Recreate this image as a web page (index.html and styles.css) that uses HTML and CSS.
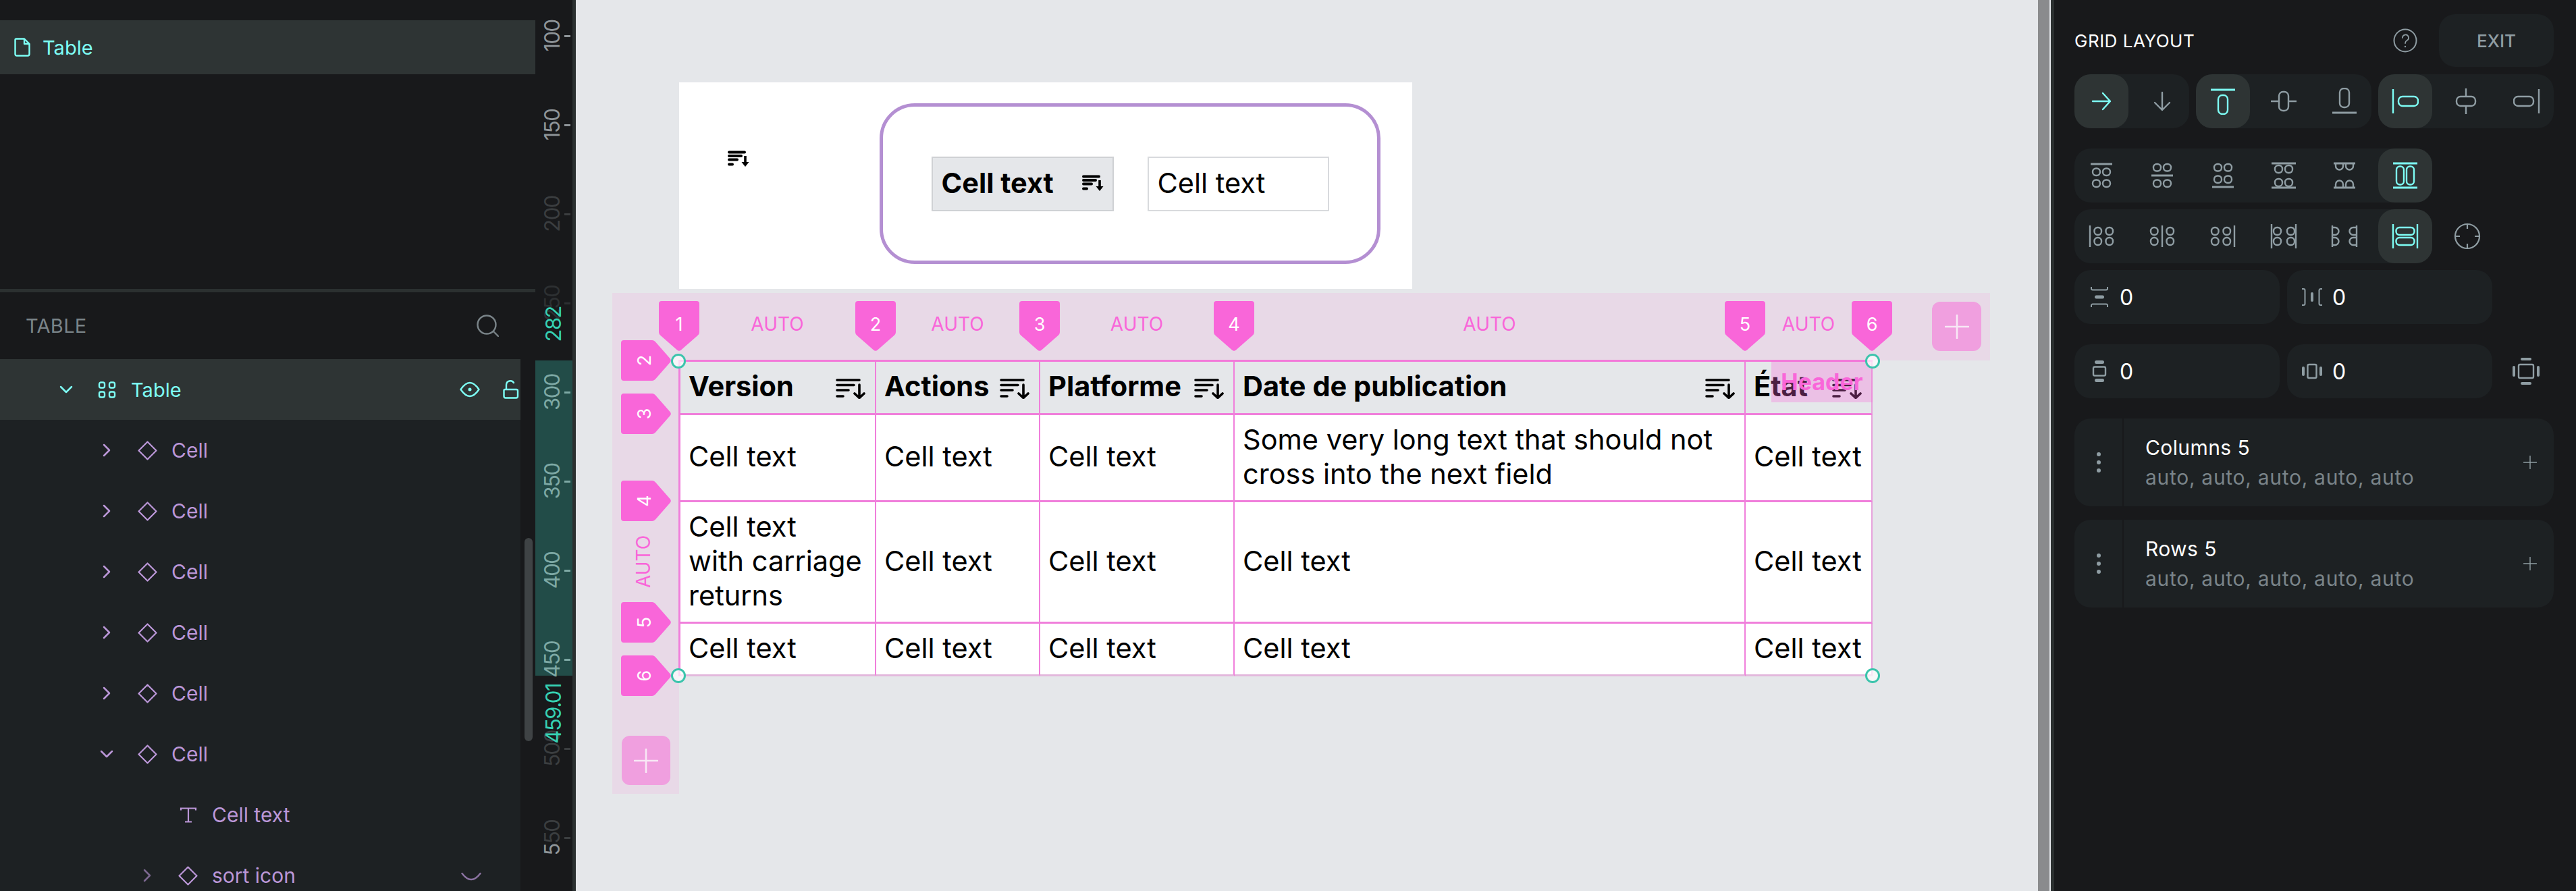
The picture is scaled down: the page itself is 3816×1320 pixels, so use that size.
FILE: index.html
```html
<!DOCTYPE html>
<html lang="en">
<head>
    <meta charset="UTF-8">
    <title>Table - Grid layout</title>
    <link rel="stylesheet" href="styles.css">
</head>
<body>
    <!-- icon sprite -->
    <svg class="sprite" xmlns="http://www.w3.org/2000/svg">
        <symbol id="i-sort" viewBox="0 0 44 31"><path d="M2 3H35M2 10.500H27M2 18H19M2 27H11M35 10V29M28 23l7 6.500 7-6.500" fill="none" stroke="currentColor" stroke-width="3.600" stroke-linecap="round" stroke-linejoin="round"/></symbol>
        <symbol id="i-sort-bold" viewBox="0 0 32 24"><path d="M2 2.500H25M2 8H20M2 13.500H14M2 20.500H7" fill="none" stroke="currentColor" stroke-width="4" stroke-linecap="round"/><path d="M26 8V20" stroke="currentColor" stroke-width="3.600"/><path d="M20.500 17H31.500L26 24Z" fill="currentColor"/></symbol>
        <symbol id="i-mark" viewBox="0 0 60 74"><path d="M4 0H56a4 4 0 0 1 4 4V46a6 6 0 0 1-2.500 5L33 72.500a4.500 4.500 0 0 1-6 0L2.500 51A6 6 0 0 1 0 46V4a4 4 0 0 1 4-4Z" fill="currentColor"/></symbol>
        <symbol id="i-plus" viewBox="0 0 36 36"><path d="M18 1V35M1 18H35" stroke="currentColor" stroke-width="2.600" stroke-linecap="round"/></symbol>
        <symbol id="i-chev-r" viewBox="0 0 20 20"><path d="M6 2l8 8-8 8" fill="none" stroke="currentColor" stroke-width="2.500" stroke-linecap="round" stroke-linejoin="round"/></symbol>
        <symbol id="i-chev-d" viewBox="0 0 20 20"><path d="M2 6l8 8 8-8" fill="none" stroke="currentColor" stroke-width="2.500" stroke-linecap="round" stroke-linejoin="round"/></symbol>
        <symbol id="i-diamond" viewBox="0 0 29 29"><path d="M14.500 1.500L27.500 14.500 14.500 27.500 1.500 14.500Z" fill="none" stroke="currentColor" stroke-width="2.200" stroke-linejoin="round"/></symbol>
        <symbol id="i-text" viewBox="0 0 29 24"><path d="M4 5V2H26V5M15 2V22M10 22H20" fill="none" stroke="currentColor" stroke-width="2.200"/></symbol>
        <symbol id="i-grid" viewBox="0 0 29 26"><g fill="none" stroke="currentColor" stroke-width="2.400"><rect x="3" y="2" width="8" height="8" rx="2.500"/><rect x="18" y="2" width="8" height="8" rx="2.500"/><rect x="3" y="16" width="8" height="8" rx="2.500"/><rect x="18" y="16" width="8" height="8" rx="2.500"/></g></symbol>
        <symbol id="i-page" viewBox="0 0 24 28"><path d="M3 1.500H15L22.500 9V24a2.500 2.500 0 0 1-2.500 2.500H4A2.500 2.500 0 0 1 1.500 24V3A1.500 1.500 0 0 1 3 1.500ZM15 1.500V9H22.500" fill="none" stroke="currentColor" stroke-width="2.400" stroke-linejoin="round"/></symbol>
        <symbol id="i-search" viewBox="0 0 33 33"><ellipse cx="15" cy="15" rx="13.500" ry="13.500" fill="none" stroke="currentColor" stroke-width="2.400"/><path d="M25 25L32 32" stroke="currentColor" stroke-width="2.400" stroke-linecap="round"/></symbol>
        <symbol id="i-eye" viewBox="0 0 30 24"><path d="M1.500 12Q15-8 28.500 12 15 32 1.500 12Z" fill="none" stroke="currentColor" stroke-width="2.400" stroke-linejoin="round"/><circle cx="15" cy="12" r="2.500" fill="currentColor"/></symbol>
        <symbol id="i-eye-off" viewBox="0 0 30 14"><path d="M1.500 2Q15 20 28.500 2" fill="none" stroke="currentColor" stroke-width="2.400" stroke-linecap="round"/></symbol>
        <symbol id="i-lock" viewBox="0 0 24 28"><path d="M3 14H20a2 2 0 0 1 2 2V24a2.500 2.500 0 0 1-2.500 2.500H4A2.500 2.500 0 0 1 1.500 24V15.500A1.500 1.500 0 0 1 3 14ZM5 14V7a6 6 0 0 1 11-3" fill="none" stroke="currentColor" stroke-width="2.400" stroke-linecap="round"/></symbol>
        <symbol id="i-help" viewBox="0 0 36 36"><circle cx="18" cy="18" r="16.500" fill="none" stroke="currentColor" stroke-width="2"/><path d="M14 14a4.500 4.500 0 1 1 6.500 4c-1.800 1-2.500 2-2.500 4" fill="none" stroke="currentColor" stroke-width="1.800" stroke-linecap="round"/><circle cx="18" cy="27" r="1.200" fill="currentColor"/></symbol>
        <symbol id="i-right" viewBox="0 0 40 40"><path d="M7 20H33M22 8L33 20 22 32" fill="none" stroke="currentColor" stroke-width="2.400" stroke-linecap="round" stroke-linejoin="round"/></symbol>
        <symbol id="i-down" viewBox="0 0 40 40"><path d="M20 7V33M9 22L20 33 31 22" fill="none" stroke="currentColor" stroke-width="2.400" stroke-linecap="round" stroke-linejoin="round"/></symbol>
        <symbol id="i-al-top" viewBox="0 0 40 40"><path d="M2 3H38" stroke="currentColor" stroke-width="3"/><rect x="13" y="11" width="14" height="28" rx="6" fill="none" stroke="currentColor" stroke-width="2.400"/></symbol>
        <symbol id="i-al-mid" viewBox="0 0 40 40"><path d="M1 20H13M27 20H39" stroke="currentColor" stroke-width="2.400"/><rect x="13" y="6" width="14" height="28" rx="6" fill="none" stroke="currentColor" stroke-width="2.400"/></symbol>
        <symbol id="i-al-bot" viewBox="0 0 40 40"><path d="M2 37H38" stroke="currentColor" stroke-width="3"/><rect x="13" y="1" width="14" height="28" rx="6" fill="none" stroke="currentColor" stroke-width="2.400"/></symbol>
        <symbol id="i-al-left" viewBox="0 0 40 40"><path d="M2 2V38" stroke="currentColor" stroke-width="2.400"/><rect x="10" y="13" width="29" height="14" rx="6" fill="none" stroke="currentColor" stroke-width="2.400"/></symbol>
        <symbol id="i-al-center" viewBox="0 0 40 40"><path d="M20 1V13M20 27V39" stroke="currentColor" stroke-width="2.400"/><rect x="6" y="13" width="28" height="14" rx="6" fill="none" stroke="currentColor" stroke-width="2.400"/></symbol>
        <symbol id="i-al-right" viewBox="0 0 40 40"><path d="M38 2V38" stroke="currentColor" stroke-width="2.400"/><rect x="1" y="13" width="29" height="14" rx="6" fill="none" stroke="currentColor" stroke-width="2.400"/></symbol>
        <g id="ovals-a" fill="none" stroke="currentColor" stroke-width="2.400"><rect x="7" y="9.500" width="11" height="10.500" rx="5"/><rect x="22" y="9.500" width="11" height="10.500" rx="5"/><rect x="7" y="26.500" width="11" height="10.500" rx="5"/><rect x="22" y="26.500" width="11" height="10.500" rx="5"/></g>
        <g id="ovals-b" fill="none" stroke="currentColor" stroke-width="2.400"><rect x="7" y="3" width="11" height="10.500" rx="5"/><rect x="22" y="3" width="11" height="10.500" rx="5"/><rect x="7" y="26.500" width="11" height="10.500" rx="5"/><rect x="22" y="26.500" width="11" height="10.500" rx="5"/></g>
        <g id="ovals-c" fill="none" stroke="currentColor" stroke-width="2.400"><rect x="7" y="3" width="11" height="10.500" rx="5"/><rect x="22" y="3" width="11" height="10.500" rx="5"/><rect x="7" y="20.500" width="11" height="10.500" rx="5"/><rect x="22" y="20.500" width="11" height="10.500" rx="5"/></g>
        <g id="ovals-d" fill="none" stroke="currentColor" stroke-width="2.400"><rect x="7" y="5" width="11" height="11" rx="5"/><rect x="22" y="5" width="11" height="11" rx="5"/><rect x="7" y="25" width="11" height="11" rx="5"/><rect x="22" y="25" width="11" height="11" rx="5"/></g>
        <path id="ovals-e" d="M7 2V6a5.500 5.500 0 0 0 11 0V2M22 2V6a5.500 5.500 0 0 0 11 0V2M7 38V33a5.500 5.500 0 0 1 11 0V38M22 38V33a5.500 5.500 0 0 1 11 0V38" fill="none" stroke="currentColor" stroke-width="2.400"/>
        <g id="tall" fill="none" stroke="currentColor" stroke-width="2.400"><rect x="7" y="6.500" width="11" height="27" rx="5"/><rect x="22" y="6.500" width="11" height="27" rx="5"/></g>
        <symbol id="i-a1" viewBox="0 0 40 40"><path d="M4 3H36" stroke="currentColor" stroke-width="3"/><use href="#ovals-a"/></symbol>
        <symbol id="i-a2" viewBox="0 0 40 40"><path d="M4 20H36" stroke="currentColor" stroke-width="3"/><use href="#ovals-b"/></symbol>
        <symbol id="i-a3" viewBox="0 0 40 40"><path d="M4 37H36" stroke="currentColor" stroke-width="3"/><use href="#ovals-c"/></symbol>
        <symbol id="i-a4" viewBox="0 0 40 40"><path d="M2 2H38M2 38H38" stroke="currentColor" stroke-width="3"/><use href="#ovals-d"/></symbol>
        <symbol id="i-a5" viewBox="0 0 40 40"><path d="M4 2H36M4 38H36" stroke="currentColor" stroke-width="3"/><use href="#ovals-e"/></symbol>
        <symbol id="i-a6" viewBox="0 0 40 40"><path d="M2 2H38M2 38H38" stroke="currentColor" stroke-width="3"/><use href="#tall"/></symbol>
        <symbol id="i-b1" viewBox="0 0 40 40"><g transform="matrix(0 1 1 0 0 0)"><path d="M4 3H36" stroke="currentColor" stroke-width="2.400"/><use href="#ovals-a"/></g></symbol>
        <symbol id="i-b2" viewBox="0 0 40 40"><g transform="matrix(0 1 1 0 0 0)"><path d="M4 20H36" stroke="currentColor" stroke-width="2.400"/><use href="#ovals-b"/></g></symbol>
        <symbol id="i-b3" viewBox="0 0 40 40"><g transform="matrix(0 1 1 0 0 0)"><path d="M4 37H36" stroke="currentColor" stroke-width="2.400"/><use href="#ovals-c"/></g></symbol>
        <symbol id="i-b4" viewBox="0 0 40 40"><g transform="matrix(0 1 1 0 0 0)"><path d="M2 2H38M2 38H38" stroke="currentColor" stroke-width="2.400"/><use href="#ovals-d"/></g></symbol>
        <symbol id="i-b5" viewBox="0 0 40 40"><g transform="matrix(0 1 1 0 0 0)"><path d="M4 2H36M4 38H36" stroke="currentColor" stroke-width="2.400"/><use href="#ovals-e"/></g></symbol>
        <symbol id="i-b6" viewBox="0 0 40 40"><g transform="matrix(0 1 1 0 0 0)"><path d="M2 2H38M2 38H38" stroke="currentColor" stroke-width="2.400"/><use href="#tall"/></g></symbol>
        <symbol id="i-target" viewBox="0 0 40 40"><circle cx="20" cy="20" r="18" fill="none" stroke="currentColor" stroke-width="2.200"/><path d="M20 2V9M20 31V38M2 20H9M31 20H38" stroke="currentColor" stroke-width="2.200"/></symbol>
        <symbol id="i-rowgap" viewBox="0 0 32 32"><path d="M4 1V3.500A2 2 0 0 0 6 5.500H26A2 2 0 0 0 28 3.500V1M4 31V28.500A2 2 0 0 1 6 26.500H26A2 2 0 0 1 28 28.500V31" fill="none" stroke="currentColor" stroke-width="2"/><rect x="9" y="13.500" width="14" height="5" rx="2.500" fill="currentColor"/></symbol>
        <symbol id="i-colgap" viewBox="0 0 32 32"><g transform="matrix(0 1 1 0 0 0)"><path d="M4 1V3.500A2 2 0 0 0 6 5.500H26A2 2 0 0 0 28 3.500V1M4 31V28.500A2 2 0 0 1 6 26.500H26A2 2 0 0 1 28 28.500V31" fill="none" stroke="currentColor" stroke-width="2"/><rect x="9" y="14" width="14" height="4" rx="2" fill="currentColor"/></g></symbol>
        <symbol id="i-padv" viewBox="0 0 32 32"><rect x="9" y="0" width="14" height="5" rx="2.500" fill="currentColor"/><rect x="7" y="9.500" width="18" height="13" rx="2" fill="none" stroke="currentColor" stroke-width="2.400"/><rect x="9" y="27" width="14" height="5" rx="2.500" fill="currentColor"/></symbol>
        <symbol id="i-padh" viewBox="0 0 32 32"><rect x="1" y="9" width="4" height="14" rx="2" fill="currentColor"/><rect x="9.500" y="6" width="13" height="20" rx="2" fill="none" stroke="currentColor" stroke-width="2.400"/><rect x="27" y="9" width="4" height="14" rx="2" fill="currentColor"/></symbol>
        <symbol id="i-padall" viewBox="0 0 40 40"><rect x="12" y="0" width="16" height="4" rx="2" fill="currentColor"/><rect x="12" y="36" width="16" height="4" rx="2" fill="currentColor"/><rect x="0" y="12" width="4" height="16" rx="2" fill="currentColor"/><rect x="36" y="12" width="4" height="16" rx="2" fill="currentColor"/><rect x="9" y="10" width="22" height="20" rx="2" fill="none" stroke="currentColor" stroke-width="2.400"/></symbol>
        <symbol id="i-dots" viewBox="0 0 8 32"><circle cx="4" cy="4" r="3"/><circle cx="4" cy="16" r="3"/><circle cx="4" cy="28" r="3"/></symbol>
    </svg>

    <div class="app">
        <aside class="sidebar">
            <div class="pages">
                <div class="page-row">
                    <svg class="ico-page"><use href="#i-page"/></svg>
                    <span>Table</span>
                </div>
            </div>
            <div class="sidebar-divider"></div>
            <div class="layers-head">
                <span>TABLE</span>
                <svg class="ico-search"><use href="#i-search"/></svg>
            </div>
            <div class="layers-body">
                <div class="layers">
                    <div class="layer layer-root">
                        <svg class="chev"><use href="#i-chev-d"/></svg>
                        <svg class="layer-ico"><use href="#i-grid"/></svg>
                        <span>Table</span>
                        <span class="layer-actions">
                            <svg class="ico-eye"><use href="#i-eye"/></svg>
                            <svg class="ico-lock"><use href="#i-lock"/></svg>
                        </span>
                    </div>
                    <div class="layer depth-1"><svg class="chev"><use href="#i-chev-r"/></svg><svg class="layer-ico"><use href="#i-diamond"/></svg><span>Cell</span></div>
                    <div class="layer depth-1"><svg class="chev"><use href="#i-chev-r"/></svg><svg class="layer-ico"><use href="#i-diamond"/></svg><span>Cell</span></div>
                    <div class="layer depth-1"><svg class="chev"><use href="#i-chev-r"/></svg><svg class="layer-ico"><use href="#i-diamond"/></svg><span>Cell</span></div>
                    <div class="layer depth-1"><svg class="chev"><use href="#i-chev-r"/></svg><svg class="layer-ico"><use href="#i-diamond"/></svg><span>Cell</span></div>
                    <div class="layer depth-1"><svg class="chev"><use href="#i-chev-r"/></svg><svg class="layer-ico"><use href="#i-diamond"/></svg><span>Cell</span></div>
                    <div class="layer depth-1"><svg class="chev"><use href="#i-chev-d"/></svg><svg class="layer-ico"><use href="#i-diamond"/></svg><span>Cell</span></div>
                    <div class="layer depth-2"><span class="chev"></span><svg class="layer-ico"><use href="#i-text"/></svg><span>Cell text</span></div>
                    <div class="layer depth-2">
                        <svg class="chev dim"><use href="#i-chev-r"/></svg>
                        <svg class="layer-ico"><use href="#i-diamond"/></svg>
                        <span>sort icon</span>
                        <svg class="ico-eye-off"><use href="#i-eye-off"/></svg>
                    </div>
                </div>
                <div class="scroll-gutter"><div class="scroll-thumb"></div></div>
            </div>
        </aside>

        <div class="ruler">
            <div class="ruler-band"></div>
            <div class="tick t100"><span>100</span></div>
            <div class="tick t150"><span>150</span></div>
            <div class="tick t200 faint"><span>200</span></div>
            <div class="tick t250 fainter"><span>250</span></div>
            <div class="tick t300 on-band"><span>300</span></div>
            <div class="tick t350 on-band"><span>350</span></div>
            <div class="tick t400 on-band"><span>400</span></div>
            <div class="tick t450 on-band"><span>450</span></div>
            <div class="tick t500 faint"><span>500</span></div>
            <div class="tick t550 faint"><span><b>5</b>50</span></div>
            <div class="ruler-value v-start">282</div>
            <div class="ruler-value v-end">459.01</div>
        </div>
        <div class="edge"></div>

        <main class="canvas">
            <div class="artboard">
                <svg class="ico-sort-small loose"><use href="#i-sort-bold"/></svg>
                <div class="frame">
                    <div class="demo-cell demo-head">
                        <span>Cell text</span>
                        <svg class="ico-sort-small"><use href="#i-sort-bold"/></svg>
                    </div>
                    <div class="demo-cell">Cell text</div>
                </div>
            </div>

            <div class="col-rail">
                <div class="track"><span class="auto">AUTO</span><div class="mark"><svg><use href="#i-mark"/></svg><span>1</span></div></div>
                <div class="track"><span class="auto">AUTO</span><div class="mark"><svg><use href="#i-mark"/></svg><span>2</span></div></div>
                <div class="track"><span class="auto">AUTO</span><div class="mark"><svg><use href="#i-mark"/></svg><span>3</span></div></div>
                <div class="track"><span class="auto">AUTO</span><div class="mark"><svg><use href="#i-mark"/></svg><span>4</span></div></div>
                <div class="track"><span class="auto">AUTO</span><div class="mark"><svg><use href="#i-mark"/></svg><span>5</span></div><div class="mark mark-end"><svg><use href="#i-mark"/></svg><span>6</span></div></div>
                <div class="add-btn add-col"><svg><use href="#i-plus"/></svg></div>
            </div>
            <div class="row-rail">
                <div class="row-track r1"><div class="mark"><svg><use href="#i-mark"/></svg><span>2</span></div></div>
                <div class="row-track r2"><div class="mark"><svg><use href="#i-mark"/></svg><span>3</span></div></div>
                <div class="row-track r3"><div class="mark"><svg><use href="#i-mark"/></svg><span>4</span></div><span class="auto">AUTO</span></div>
                <div class="row-track r4"><div class="mark"><svg><use href="#i-mark"/></svg><span>5</span></div><div class="mark mark-end"><svg><use href="#i-mark"/></svg><span>6</span></div></div>
                <div class="add-btn add-row"><svg><use href="#i-plus"/></svg></div>
            </div>

            <div class="table">
                <div class="cell head"><span>Version</span><svg class="ico-sort"><use href="#i-sort"/></svg></div>
                <div class="cell head"><span>Actions</span><svg class="ico-sort"><use href="#i-sort"/></svg></div>
                <div class="cell head"><span>Platforme</span><svg class="ico-sort"><use href="#i-sort"/></svg></div>
                <div class="cell head"><span>Date de publication</span><svg class="ico-sort"><use href="#i-sort"/></svg></div>
                <div class="cell head"><span>État</span><svg class="ico-sort"><use href="#i-sort"/></svg></div>

                <div class="cell">Cell text</div>
                <div class="cell">Cell text</div>
                <div class="cell">Cell text</div>
                <div class="cell">Some very long text that should not<br>cross into the next field</div>
                <div class="cell">Cell text</div>

                <div class="cell">Cell text<br>with carriage<br>returns</div>
                <div class="cell">Cell text</div>
                <div class="cell">Cell text</div>
                <div class="cell">Cell text</div>
                <div class="cell">Cell text</div>

                <div class="cell">Cell text</div>
                <div class="cell">Cell text</div>
                <div class="cell">Cell text</div>
                <div class="cell">Cell text</div>
                <div class="cell">Cell text</div>

                <div class="area-label">Header</div>
                <i class="handle tl"></i><i class="handle tr"></i><i class="handle bl"></i><i class="handle br"></i>
            </div>
        </main>

        <div class="split-handle"></div>
        <div class="split-gap"></div>
        <div class="edge"></div>

        <aside class="panel">
            <div class="panel-head">
                <span class="panel-title">GRID LAYOUT</span>
                <svg class="ico-help"><use href="#i-help"/></svg>
                <div class="exit-btn">EXIT</div>
            </div>

            <div class="tool-row row-first">
                <div class="tool-group">
                    <div class="tool active"><svg><use href="#i-right"/></svg></div>
                    <div class="tool"><svg><use href="#i-down"/></svg></div>
                </div>
                <div class="tool-group">
                    <div class="tool active"><svg><use href="#i-al-top"/></svg></div>
                    <div class="tool"><svg><use href="#i-al-mid"/></svg></div>
                    <div class="tool"><svg><use href="#i-al-bot"/></svg></div>
                </div>
                <div class="tool-group">
                    <div class="tool active"><svg><use href="#i-al-left"/></svg></div>
                    <div class="tool"><svg><use href="#i-al-center"/></svg></div>
                    <div class="tool"><svg><use href="#i-al-right"/></svg></div>
                </div>
            </div>

            <div class="tool-row row-second">
                <div class="tool-group">
                    <div class="tool"><svg><use href="#i-a1"/></svg></div>
                    <div class="tool"><svg><use href="#i-a2"/></svg></div>
                    <div class="tool"><svg><use href="#i-a3"/></svg></div>
                    <div class="tool"><svg><use href="#i-a4"/></svg></div>
                    <div class="tool"><svg><use href="#i-a5"/></svg></div>
                    <div class="tool active"><svg><use href="#i-a6"/></svg></div>
                </div>
            </div>

            <div class="tool-row row-third">
                <div class="tool-group">
                    <div class="tool"><svg><use href="#i-b1"/></svg></div>
                    <div class="tool"><svg><use href="#i-b2"/></svg></div>
                    <div class="tool"><svg><use href="#i-b3"/></svg></div>
                    <div class="tool"><svg><use href="#i-b4"/></svg></div>
                    <div class="tool"><svg><use href="#i-b5"/></svg></div>
                    <div class="tool active"><svg><use href="#i-b6"/></svg></div>
                </div>
                <svg class="side-ico target"><use href="#i-target"/></svg>
            </div>

            <div class="input-row row-third">
                <div class="num-input"><svg><use href="#i-rowgap"/></svg><span>0</span></div>
                <div class="num-input"><svg><use href="#i-colgap"/></svg><span>0</span></div>
            </div>
            <div class="input-row row-second">
                <div class="num-input"><svg><use href="#i-padv"/></svg><span>0</span></div>
                <div class="num-input"><svg><use href="#i-padh"/></svg><span>0</span></div>
                <svg class="side-ico"><use href="#i-padall"/></svg>
            </div>

            <div class="track-card first-card">
                <div class="card-grip"><svg><use href="#i-dots"/></svg></div>
                <div class="card-body">
                    <div class="card-title">Columns 5</div>
                    <div class="card-sub">auto, auto, auto, auto, auto</div>
                </div>
                <svg class="card-plus"><use href="#i-plus"/></svg>
            </div>
            <div class="track-card">
                <div class="card-grip"><svg><use href="#i-dots"/></svg></div>
                <div class="card-body">
                    <div class="card-title">Rows 5</div>
                    <div class="card-sub">auto, auto, auto, auto, auto</div>
                </div>
                <svg class="card-plus"><use href="#i-plus"/></svg>
            </div>
        </aside>
    </div>
</body>
</html>
```

FILE: styles.css
```css
* {
    box-sizing: border-box;
}
body {
    margin: 0;
    overflow: hidden;
    background: #18191b;
    font-family: Inter, "Liberation Sans", sans-serif;
}
svg {
    display: block;
}
.sprite {
    position: absolute;
    width: 0;
    height: 0;
}
.app {
    display: flex;
    height: 1320px;
}

/* left sidebar */
.sidebar {
    width: 793px;
    height: 1320px;
    display: flex;
    flex-direction: column;
    background: #18191b;
    overflow: hidden;
}
.pages {
    height: 428px;
    flex-shrink: 0;
    padding-top: 30px;
}
.page-row {
    height: 80px;
    background: #2e3434;
    color: #7efff5;
    display: flex;
    align-items: center;
    padding-left: 21px;
    font-size: 29px;
}
.ico-page {
    width: 24px;
    height: 28px;
    margin-right: 18px;
}
.sidebar-divider {
    height: 5px;
    flex-shrink: 0;
    background: #2b3030;
}
.layers-head {
    height: 99px;
    flex-shrink: 0;
    display: flex;
    align-items: center;
    justify-content: space-between;
    padding: 0 54px 0 38px;
    color: #7a8489;
    font-size: 29px;
    letter-spacing: 0.3px;
}
.ico-search {
    width: 33px;
    height: 33px;
}
.layers-body {
    flex: 1;
    min-height: 0;
    display: flex;
}
.layers {
    width: 771px;
    background: #1d2123;
}
.layer {
    height: 90px;
    display: flex;
    align-items: center;
    color: #bb97d8;
    font-size: 30px;
}
.layer-root {
    padding: 0 2px 0 88px;
    background: #2e3434;
    color: #7efff5;
    font-size: 29px;
}
.depth-1 {
    padding-left: 148px;
}
.depth-2 {
    padding-left: 208px;
}
.chev {
    width: 20px;
    height: 20px;
    margin-right: 36px;
    flex-shrink: 0;
}
.chev.dim {
    opacity: 0.6;
}
.layer-ico {
    width: 29px;
    height: 29px;
    margin-right: 21px;
    flex-shrink: 0;
}
.layer-actions {
    margin-left: auto;
    display: flex;
    align-items: center;
    gap: 34px;
}
.ico-eye {
    width: 30px;
    height: 24px;
}
.ico-lock {
    width: 24px;
    height: 28px;
}
.ico-eye-off {
    width: 30px;
    height: 14px;
    margin: 0 58px 0 auto;
    position: relative;
    top: 2px;
    opacity: 0.7;
}
.scroll-gutter {
    width: 22px;
    position: relative;
}
.scroll-thumb {
    position: absolute;
    left: 6px;
    top: 265px;
    width: 12px;
    height: 301px;
    border-radius: 6px;
    background: #3f4345;
}

/* vertical ruler */
.ruler {
    width: 55px;
    height: 1320px;
    position: relative;
    background: #18191b;
}
.ruler-band {
    position: absolute;
    left: 0;
    top: 534px;
    width: 55px;
    height: 467px;
    background: #224c48;
}
.tick {
    position: absolute;
    left: 43px;
    width: 9px;
    height: 3px;
    background: #8f9599;
    color: #8f9599;
}
.tick span {
    position: absolute;
    left: -34px;
    top: 1px;
    width: 32px;
    font-size: 31px;
    line-height: 32px;
    letter-spacing: -1.500px;
    white-space: nowrap;
    writing-mode: vertical-rl;
    transform: translateY(-50%) rotate(180deg);
}
.tick b {
    font-weight: 400;
    color: #8f9599;
}
.faint {
    background: #3b3e40;
    color: #3b3e40;
}
.fainter {
    background: #2d3032;
    color: #2d3032;
}
.on-band {
    background: #7ea9a5;
    color: #7ea9a5;
}
.t100 { top: 52px; }
.t150 { top: 184px; }
.t200 { top: 316px; }
.t250 { top: 448px; }
.t300 { top: 580px; }
.t350 { top: 712px; }
.t400 { top: 844px; }
.t450 { top: 976px; }
.t500 { top: 1108px; }
.t550 { top: 1240px; }
.ruler-value {
    position: absolute;
    left: 11px;
    width: 32px;
    text-align: center;
    writing-mode: vertical-rl;
    transform: rotate(180deg);
    font-size: 31px;
    line-height: 32px;
    letter-spacing: -1.500px;
    color: #36d1b3;
}
.v-start {
    top: 454px;
}
.v-end {
    top: 1013px;
}
.edge {
    width: 5px;
    background: #2b3030;
}

/* canvas */
.canvas {
    flex: 1;
    position: relative;
    background: #e5e7ea;
    overflow: hidden;
    color: #000;
}
.artboard {
    position: absolute;
    left: 153px;
    top: 122px;
    width: 1086px;
    height: 306px;
    background: #fff;
}
.ico-sort-small {
    width: 32px;
    height: 24px;
    flex-shrink: 0;
}
.ico-sort-small.loose {
    position: absolute;
    left: 72px;
    top: 101px;
}
.frame {
    position: absolute;
    left: 297px;
    top: 31px;
    width: 742px;
    height: 238px;
    border: 5px solid #b48fd2;
    border-radius: 52px;
    display: flex;
    align-items: center;
    justify-content: center;
    gap: 50px;
}
.demo-cell {
    width: 269px;
    height: 81px;
    border: 2px solid #d8dadd;
    padding: 0 13px 3px;
    display: flex;
    align-items: center;
    font-size: 41.500px;
}
.demo-head {
    width: 270px;
    background: #e5e7ea;
    border-color: #cfd1d4;
    font-weight: 700;
    justify-content: space-between;
}

/* grid editor rails */
.col-rail {
    position: absolute;
    left: 54px;
    top: 434px;
    width: 2041px;
    height: 100px;
    padding-left: 99px;
    background: #e8d9e7;
    display: grid;
    grid-template-columns: 291px 243px 288px 757px 188px;
}
.track {
    position: relative;
    text-align: center;
    padding-top: 26px;
}
.auto {
    color: #f966d9;
    font-size: 28px;
    line-height: 40px;
}
.mark {
    position: absolute;
    left: -30px;
    top: 12px;
    width: 60px;
    height: 74px;
    color: #f966d9;
}
.mark svg {
    width: 60px;
    height: 74px;
}
.mark span {
    position: absolute;
    left: 0;
    right: 0;
    top: 16px;
    text-align: center;
    color: #fff;
    font-size: 27px;
    line-height: 38px;
}
.mark-end {
    left: auto;
    right: -30px;
}
.add-btn {
    position: absolute;
    background: #f09fdf;
    color: #f8e8f5;
    border-radius: 12px;
    display: flex;
    align-items: center;
    justify-content: center;
}
.add-btn svg {
    width: 36px;
    height: 36px;
}
.add-col {
    right: 13px;
    top: 13px;
    width: 73px;
    height: 73px;
}
.row-rail {
    position: absolute;
    left: 54px;
    top: 534px;
    width: 99px;
    height: 642px;
    background: #e8d9e7;
}
.row-track {
    position: relative;
}
.r1 { height: 79px; }
.r2 { height: 129px; }
.r3 { height: 180px; }
.r4 { height: 79px; }
.row-track .mark {
    left: 20px;
    top: -37px;
    transform: rotate(-90deg);
}
.row-track .mark-end {
    left: 20px;
    right: auto;
    top: auto;
    bottom: -37px;
}
.row-track .auto {
    position: absolute;
    left: 26px;
    top: 0;
    bottom: 0;
    width: 40px;
    text-align: center;
    writing-mode: vertical-rl;
    transform: rotate(180deg);
}
.add-row {
    left: 14px;
    top: 556px;
    width: 72px;
    height: 73px;
}

/* table */
.table {
    position: absolute;
    left: 152px;
    top: 533px;
    width: 1769px;
    border-left: 3px solid #f07fdb;
    border-top: 3px solid #f27ad9;
    display: grid;
    grid-template-columns: 290px 243px 288px 757px 188px;
    grid-template-rows: 79px 129px 180px 78px;
    font-size: 41.500px;
    line-height: 51px;
    background: #fff;
}
.cell {
    display: flex;
    align-items: center;
    padding: 0 14px 3px 12px;
    border-right: 2px solid #f07fdb;
    border-bottom: 3px solid #f07fdb;
    white-space: nowrap;
}
.cell:nth-child(5n) {
    border-right-color: #e7a2dc;
}
.cell:nth-child(n+16) {
    border-bottom-color: #e3b8dc;
}
.head {
    justify-content: space-between;
    background: #e5e7ea;
    font-weight: 700;
}
.ico-sort {
    width: 44px;
    height: 31px;
    flex-shrink: 0;
    position: relative;
    top: 3px;
}
.area-label {
    position: absolute;
    right: 0;
    top: -1px;
    width: 150px;
    height: 61px;
    background: rgba(249, 102, 217, 0.3);
    color: #f966d9;
    font-size: 34px;
    font-weight: 700;
    line-height: 61px;
    text-align: center;
}
.handle {
    position: absolute;
    width: 22px;
    height: 22px;
    border: 3px solid #3cc4ac;
    border-radius: 50%;
    background: rgba(255, 255, 255, 0.7);
}
.tl { left: -14px; top: -12px; }
.tr { right: -11px; top: -12px; }
.bl { left: -14px; bottom: -10px; }
.br { right: -11px; bottom: -10px; }

/* right split */
.split-handle {
    width: 17px;
    background: #8a8b8d;
}
.split-gap {
    width: 2px;
    background: #e5e7ea;
}

/* right panel */
.panel {
    width: 773px;
    padding: 21px 33px 0 30px;
    background: #18191b;
}
.panel-head {
    height: 78px;
    display: flex;
    align-items: center;
}
.panel-title {
    color: #fff;
    font-size: 26px;
    letter-spacing: 0.500px;
}
.ico-help {
    width: 36px;
    height: 36px;
    margin-left: auto;
    margin-right: 32px;
    color: #8f9da3;
}
.exit-btn {
    width: 170px;
    height: 78px;
    border-radius: 24px;
    background: #1d2123;
    color: #8f9da3;
    font-size: 26px;
    font-weight: 500;
    display: flex;
    align-items: center;
    justify-content: center;
}
.tool-row,
.input-row {
    display: flex;
    align-items: center;
    gap: 10px;
}
.input-row {
    gap: 11px;
}
.row-first {
    margin-top: 11px;
}
.row-second {
    margin-top: 30px;
}
.row-third {
    margin-top: 10px;
}
.tool-group {
    display: flex;
    gap: 10px;
    background: #1d2123;
    border-radius: 24px;
}
.tool {
    width: 80px;
    height: 80px;
    border-radius: 24px;
    color: #8f9da3;
    display: flex;
    align-items: center;
    justify-content: center;
}
.tool.active {
    background: #2e3434;
    color: #7efff5;
}
.tool svg {
    width: 40px;
    height: 40px;
}
.side-ico {
    width: 40px;
    height: 40px;
    margin-left: 19px;
    color: #8f9da3;
}
.target {
    margin-left: 22px;
}
.num-input {
    width: 304px;
    height: 80px;
    border-radius: 24px;
    background: #1d2123;
    padding-left: 21px;
    display: flex;
    align-items: center;
    color: #fff;
    font-size: 32px;
}
.num-input svg {
    width: 32px;
    height: 32px;
    margin-right: 14px;
    color: #8f9da3;
}
.track-card {
    height: 130px;
    margin-top: 20px;
    border-radius: 24px;
    background: #1d2123;
    display: flex;
    align-items: center;
}
.first-card {
    margin-top: 30px;
}
.card-grip {
    width: 73px;
    height: 130px;
    border-right: 2px solid #18191b;
    display: flex;
    align-items: center;
    justify-content: center;
    fill: #8f9da3;
}
.card-grip svg {
    width: 8px;
    height: 32px;
}
.card-body {
    flex: 1;
    padding-left: 32px;
}
.card-title {
    color: #fff;
    font-size: 30px;
    letter-spacing: 0.400px;
    line-height: 44px;
}
.card-sub {
    color: #7a8489;
    font-size: 30px;
    letter-spacing: 0.700px;
    line-height: 44px;
}
.card-plus {
    width: 20px;
    height: 20px;
    margin-right: 25px;
    color: #8f9da3;
}
```
